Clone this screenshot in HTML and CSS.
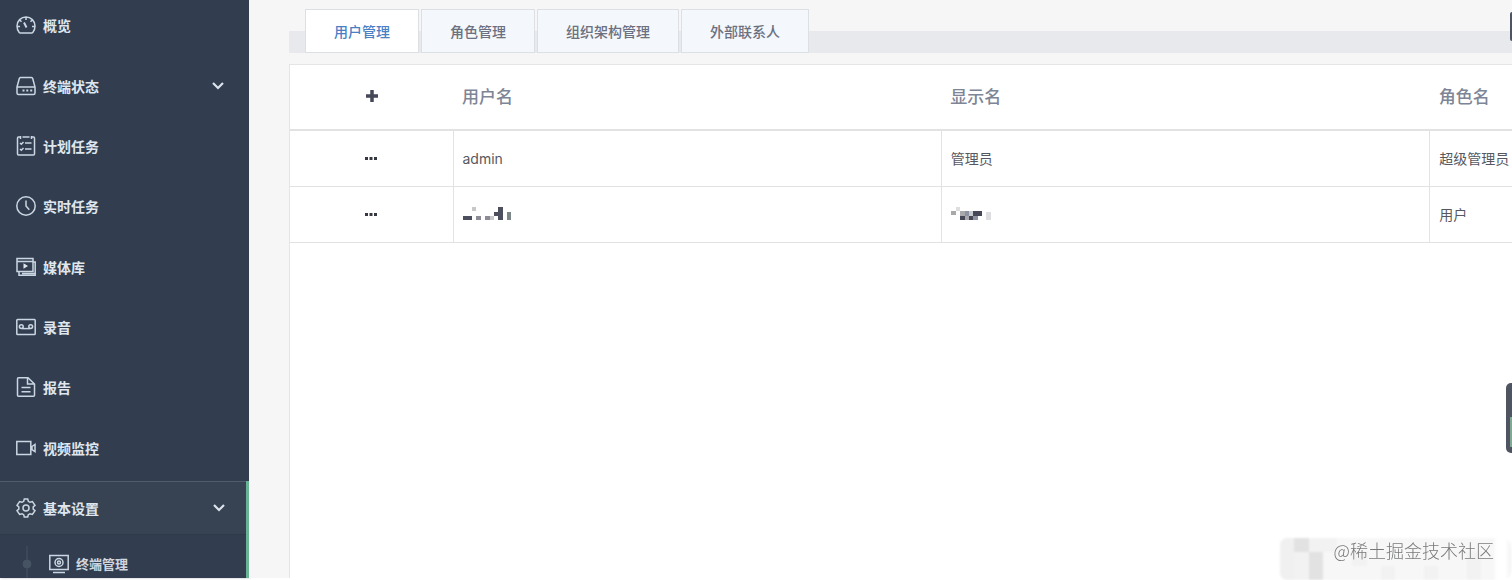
FILE: index.html
```html
<!DOCTYPE html>
<html lang="zh-CN">
<head>
<meta charset="utf-8">
<title>用户管理</title>
<link rel="stylesheet" href="styles.css">
</head>
<body>
<div class="app">
  <nav class="sidebar">
    <ul class="menu">
      <li><a class="item" href="#"><svg class="icon" viewBox="0 0 20 20"><path d="M3.200 17.500Q1 15 1 11a9 9 0 0 1 18 0q0 4-2.200 6.500-.4.500-1.200.5H4.400q-.8 0-1.200-.5zM10 2.300v2.700M4 5.300l1.500 1.500M16 5.300l-1.500 1.500M1 11.500h3M19 11.500h-3"/><path class="thick" d="M8 7.500l2.500 5"/></svg>概览</a></li>
      <li><a class="item" href="#"><svg class="icon" viewBox="0 0 20 20"><path d="M1 11 3.300 2.500q.3-1 1.200-1h11q.9 0 1.200 1L19 11v6q0 1.500-1.500 1.500h-15Q1 18.500 1 17zM1 11h18"/><path class="thick" d="M6.500 14.500h2M10.300 14.500h2M14.200 14.500h2"/></svg>终端状态<svg class="chevron" viewBox="0 0 12 8"><path d="M1 1l5 5 5-5"/></svg></a></li>
      <li><a class="item" href="#"><svg class="icon" viewBox="0 0 20 20"><path d="M4.500 1H2.500Q1.500 1 1.500 2v16q0 1 1 1h15q1 0 1-1V2q0-1-1-1h-2M6.500 1h7M4.500 0v3M15.500 0v3M9 7h6.500M9 13h6.500M4 7l1.300 1.300L7.500 6M4 13l1.300 1.300L7.500 12"/></svg>计划任务</a></li>
      <li><a class="item" href="#"><svg class="icon" viewBox="0 0 20 20"><circle cx="10" cy="10" r="9.200"/><path d="M10 4.500V10l3.300 3.800"/></svg>实时任务</a></li>
      <li><a class="item" href="#"><svg class="icon" viewBox="0 0 20 20"><path d="M1 1.500h16v13H1zM1 4.500h16M3 14.500v3.700h16.200V5H17M6 16.500h13"/><path class="solid" d="M7.500 6.300v5.500l4.500-2.700z"/></svg>媒体库</a></li>
      <li><a class="item" href="#"><svg class="icon" viewBox="0 0 20 20"><rect x=".8" y="2.500" width="18.400" height="15" rx=".8"/><circle cx="5.300" cy="9.600" r="1.900"/><circle cx="14.700" cy="9.600" r="1.900"/><path d="M6 11.600h8"/></svg>录音</a></li>
      <li><a class="item" href="#"><svg class="icon" viewBox="0 0 20 20"><path d="M12 .8H2.500q-1 0-1 1v16.400q0 1 1 1h15q1 0 1-1V7zM11.500 1v6h7M5.500 10.500h9M5.500 14.800h9"/></svg>报告</a></li>
      <li><a class="item" href="#"><svg class="icon" viewBox="0 0 20 20"><path d="M.8 3.500h14v13H.8zM16 8.500l3-2v7l-3-2z"/></svg>视频监控</a></li>
    </ul>
    <div class="group">
      <a class="item group-head" href="#"><svg class="icon" viewBox="0 0 20 20"><path d="M7.700 3.300 8.300 1h3.400l.6 2.300 1.700 1 2.400-.7 2.600 3.700-1.800 1.500v2.400l1.800 1.500-2.600 3.700-2.400-.7-1.700 1-.6 2.300H8.300l-.6-2.300-1.700-1-2.400.7L1 12.700l1.800-1.500V8.800L1 7.300l2.600-3.700 2.400.7z"/><circle cx="10" cy="10" r="3"/></svg>基本设置<svg class="chevron" viewBox="0 0 12 8"><path d="M1 1l5 5 5-5"/></svg></a>
      <a class="subitem" href="#"><svg class="tree" viewBox="0 0 10 36"><path d="M5 0v36"/><circle cx="5" cy="18" r="4"/></svg><svg class="icon" viewBox="0 0 20 20"><path d="M.8 1.500h18.400v14H.8zM4 18.500h12"/><circle cx="10" cy="8.500" r="4"/><circle cx="10" cy="8.500" r="1.500"/></svg>终端管理</a>
    </div>
  </nav>
  <main class="content">
    <div class="tabs" role="tablist">
      <button class="tab active" role="tab" aria-selected="true">用户管理</button>
      <button class="tab" role="tab" aria-selected="false">角色管理</button>
      <button class="tab" role="tab" aria-selected="false">组织架构管理</button>
      <button class="tab" role="tab" aria-selected="false">外部联系人</button>
    </div>
    <section class="panel">
      <table class="users">
        <colgroup><col class="col-action"><col class="col-data"><col class="col-data"><col class="col-data"></colgroup>
        <thead>
          <tr><th class="action"><button class="tool" aria-label="添加"><svg class="plus" viewBox="0 0 12 12"><path d="M6 0v12M0 6h12"/></svg></button></th><th>用户名</th><th>显示名</th><th>角色名</th></tr>
        </thead>
        <tbody>
          <tr><td class="action"><button class="tool" aria-label="更多"><svg class="dots" viewBox="0 0 12 3"><path d="M0 0h3v3H0zM4.500 0h3v3h-3zM9 0h3v3H9z"/></svg></button></td><td>admin</td><td>管理员</td><td>超级管理员</td></tr>
          <tr><td class="action"><button class="tool" aria-label="更多"><svg class="dots" viewBox="0 0 12 3"><path d="M0 0h3v3H0zM4.500 0h3v3h-3zM9 0h3v3H9z"/></svg></button></td>
            <td><svg class="mosaic" viewBox="0 0 50 14"><g fill="#4d4e5e"><path d="M0 9h9v4H0zM35 0h5v13h-5zM31 5h4v4h-4z"/></g><g fill="#8b8c96"><path d="M13 9h5v4h-5zM22 9h5v4h-5z"/></g><path fill="#c8c8cb" d="M9 0h4v4H9zM27 9h4v4h-4z"/><path fill="#7c8588" d="M44 5h4v8h-4z"/></svg></td>
            <td><svg class="mosaic" viewBox="0 0 50 14"><path fill="#dedee1" d="M5 0h4v4H5zM35 5h5v8h-5z"/><path fill="#a9a9ac" d="M0 4h5v4H0zM9 4h5v5H9zM14 9h4v4h-4z"/><path fill="#454756" d="M9 9h5v4H9zM18 9h4v4h-4zM22 4h9v5h-9z"/><path fill="#8d91a2" d="M14 4h4v5h-4zM22 9h5v4h-5z"/><path fill="#c7cbd2" d="M18 4h4v5h-4z"/></svg></td>
            <td>用户</td></tr>
        </tbody>
      </table>
    </section>
  </main>
</div>
<div class="edge edge-top"></div>
<div class="edge edge-side"></div>
<div class="watermark">
  <svg class="haze" viewBox="0 0 232 42" aria-hidden="true"><rect width="232" height="42" rx="10" fill="#f7f7f7"/><path fill="#f0f0f0" d="M0 8q0-8 8-8h6v42H8q-8 0-8-8z"/><path fill="#e2e2e2" d="M14 0h15v14H14zM29 14h14v28H29z"/><path fill="#f2f2f2" d="M29 0h28v14H29zM14 14h15v28H14zM72 14h15v14H72zM101 28h14v14h-14zM144 28h14v14h-14zM187 14h14v28h-14z"/><path fill="#fff" d="M215 0h12v42h-12z"/></svg>
  <span class="mark">@稀土掘金技术社区</span>
</div>
</body>
</html>
```
FILE: styles.css
```css
* { box-sizing: border-box; }
body {
  margin: 0;
  padding-bottom: 2px;
  height: 100vh;
  overflow: hidden;
  background: #fff;
  color: #56585f;
  font-family: Inter, "Noto Sans CJK SC", sans-serif;
  font-size: 14px;
}
button { font: inherit; cursor: pointer; }
a { text-decoration: none; }
.app { display: flex; height: 100%; }

.sidebar {
  flex: none;
  display: flex;
  flex-direction: column;
  width: 249px;
  background: #323e50;
  box-shadow: 1px 0 2px #b5b8bc;
}
.menu {
  flex: 1;
  display: grid;
  grid-auto-rows: 1fr;
  margin: -5px 0 0;
  padding: 0 0 3px;
  list-style: none;
}
.item {
  display: flex;
  align-items: center;
  gap: 7px;
  height: 100%;
  padding: 0 25px 0 16px;
  color: #dfe6ee;
  font-weight: 700;
}
.icon {
  flex: none;
  width: 20px;
  height: 20px;
  fill: none;
  stroke: #cbd6e2;
  stroke-width: 1.5;
}
.icon .thick { stroke-width: 2; }
.icon .solid { fill: #dfe6ee; stroke: none; }
.chevron {
  width: 12px;
  height: 8px;
  margin-left: auto;
  fill: none;
  stroke: #dbe3ec;
  stroke-width: 2.2;
}
.group { border-right: 3px solid #68b295; }
.group-head {
  height: 54px;
  padding-right: 21px;
  border-top: 1px solid #505c6a;
  border-bottom: 1px solid #2e3a48;
  background: #374352;
}
.subitem {
  display: flex;
  align-items: center;
  gap: 7px;
  height: 43px;
  padding: 14px 0 0 22px;
  overflow: hidden;
  color: #cfd6df;
  font-size: 13px;
  font-weight: 700;
}
.tree {
  width: 10px;
  height: 36px;
  margin-right: 10px;
  fill: #465362;
  stroke: #465362;
}

.content {
  flex: 1;
  display: flex;
  flex-direction: column;
  gap: 11px;
  min-width: 0;
  padding: 9px 0 0 40px;
  background: #f6f6f6;
}
.tabs {
  display: flex;
  gap: 2px;
  padding-left: 16px;
  background: linear-gradient(transparent 22px, #e7e9ed 22px);
}
.tab {
  height: 44px;
  padding: 0 28px 1px;
  border: 1px solid #dcdfe4;
  background: #f4f7fb;
  color: #6b7080;
  font-weight: 500;
}
.tab.active { background: #fff; color: #4a7fc4; }
.panel {
  flex: 1;
  overflow: hidden;
  border: 1px solid #e4e5e7;
  border-right: 0;
  border-bottom: 0;
  background: #fff;
}
.users {
  width: 1628px;
  table-layout: fixed;
  border-collapse: collapse;
}
.col-action { width: 163px; }
.users th, .users td {
  height: 56px;
  padding: 0 9px;
  border-bottom: 1px solid #e2e2e3;
  text-align: left;
  vertical-align: middle;
}
.users th {
  height: 65px;
  padding-bottom: 3px;
  border-bottom: 2px solid #e2e2e3;
  color: #7d8596;
  font-size: 17px;
  font-weight: 500;
}
.users td + td { border-left: 1px solid #e2e2e3; }
.tool {
  display: block;
  margin: 0 auto;
  padding: 0;
  border: 0;
  background: none;
}
.plus, .dots { display: block; width: 12px; }
.plus { height: 12px; stroke: #444858; stroke-width: 3.5; }
.dots { height: 3px; fill: #35383f; }
.mosaic { display: block; width: 50px; height: 14px; }

.edge { position: fixed; right: 0; background: #4e5460; }
.edge-top { top: 12px; width: 2px; height: 29px; border-radius: 2px 0 0 2px; }
.edge-side {
  top: 383px;
  width: 6px;
  height: 70px;
  border-radius: 5px 0 0 5px;
  background: linear-gradient(#4e5460, #4e5460) left / 4px 100% no-repeat, linear-gradient(#4e5460 48%, #80a894 48% 92%, #4e5460 92%);
}
.watermark {
  position: fixed;
  right: 0;
  bottom: 0;
  display: flex;
  width: 232px;
  height: 42px;
  padding: 0 18px 18px 0;
  align-items: center;
  justify-content: flex-end;
}
.haze { position: absolute; inset: 0; filter: blur(1px); }
.mark {
  position: relative;
  color: #77787a;
  font-size: 18px;
  font-weight: 300;
  font-family: "Noto Sans CJK SC", sans-serif;
  white-space: nowrap;
  text-shadow: 0 0 1px #fff;
}
```
